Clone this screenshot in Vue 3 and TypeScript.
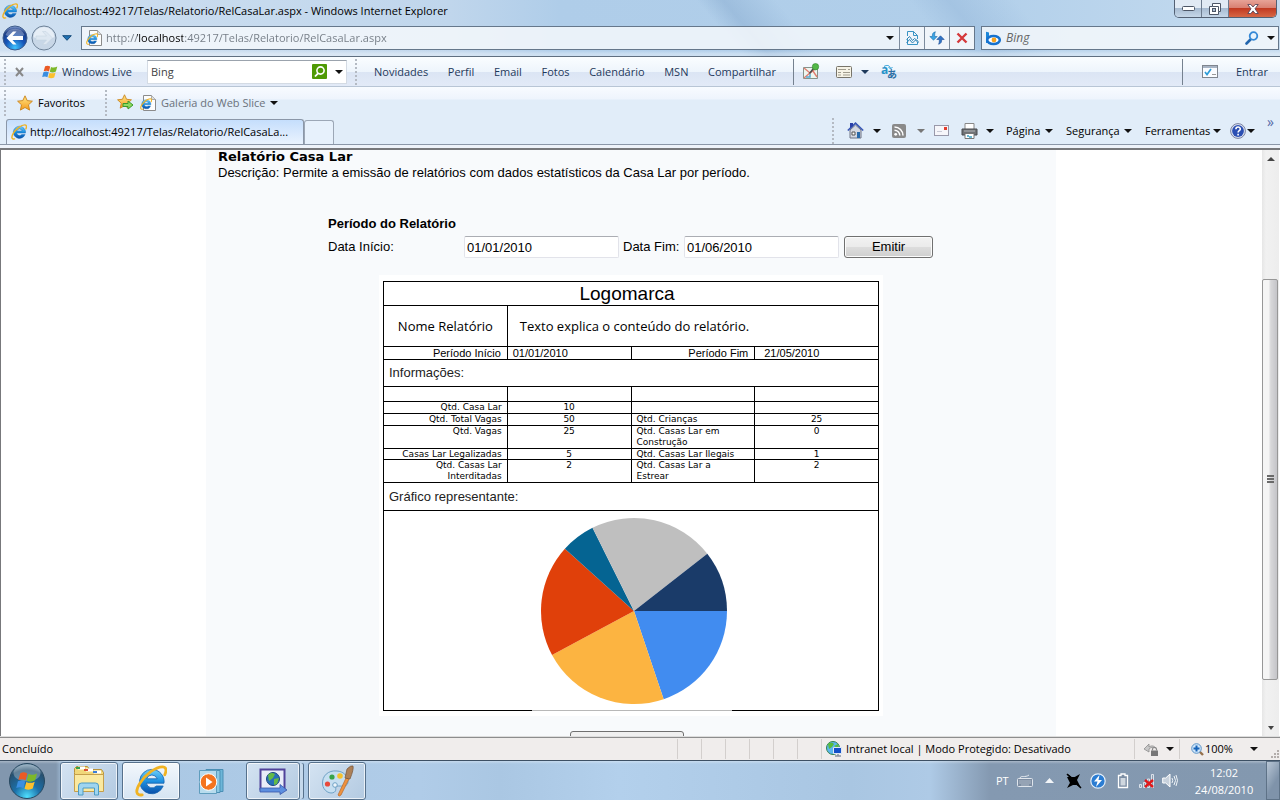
<script setup lang="ts">
import { ref } from 'vue'

interface Slice { from: number; to: number; color: string }
interface DataRow { left: string; leftValue: string; right: string; rightValue: string; tight?: boolean }

const address = ref('http://localhost:49217/Telas/Relatorio/RelCasaLar.aspx')
const toolbarSearch = ref('Bing')
const webSearch = ref('')
const startDate = ref('01/01/2010')
const endDate = ref('01/06/2010')

const liveLinks = ['Novidades', 'Perfil', 'Email', 'Fotos', 'Calendário', 'MSN', 'Compartilhar']

const rows: DataRow[] = [
  { left: 'Qtd. Casa Lar', leftValue: '10', right: '', rightValue: '' },
  { left: 'Qtd. Total Vagas', leftValue: '50', right: 'Qtd. Crianças', rightValue: '25' },
  { left: 'Qtd. Vagas', leftValue: '25', right: 'Qtd. Casas Lar em Construção', rightValue: '0' },
  { left: 'Casas Lar Legalizadas', leftValue: '5', right: 'Qtd. Casas Lar Ilegais', rightValue: '1', tight: true },
  { left: 'Qtd. Casas Lar Interditadas', leftValue: '2', right: 'Qtd. Casas Lar a Estrear', rightValue: '2' },
]

// Angles in degrees, clockwise from three o'clock
const slices: Slice[] = [
  { from: 0, to: 71.4, color: '#418cf0' },
  { from: 71.4, to: 151.8, color: '#fcb441' },
  { from: 151.8, to: 222, color: '#e0400a' },
  { from: 222, to: 243.5, color: '#056492' },
  { from: 243.5, to: 322, color: '#bfbfbf' },
  { from: 322, to: 360, color: '#1a3b69' },
]

function slicePath(s: Slice): string {
  const point = (deg: number) => {
    const a = (deg * Math.PI) / 180
    return `${(102 + 93 * Math.cos(a)).toFixed(2)} ${(100 + 93 * Math.sin(a)).toFixed(2)}`
  }
  return `M102 100L${point(s.from)}A93 93 0 0 1 ${point(s.to)}Z`
}
</script>

<template>
  <div class="desktop">
    <svg class="defs" aria-hidden="true">
      <defs>
        <linearGradient id="ieBlue" x1="0" y1="0" x2="0" y2="1">
          <stop offset="0" stop-color="#6fd0fb" /><stop offset="0.5" stop-color="#1c8fe0" /><stop offset="1" stop-color="#0a4fa8" />
        </linearGradient>
        <radialGradient id="orbBack" cx="0.5" cy="0.9" r="0.9">
          <stop offset="0" stop-color="#3fc4ff" /><stop offset="0.45" stop-color="#1555b8" /><stop offset="0.8" stop-color="#1b3c86" /><stop offset="1" stop-color="#8fa9d8" />
        </radialGradient>
        <radialGradient id="orbStart" cx="0.5" cy="0.95" r="0.95">
          <stop offset="0" stop-color="#4fe0ff" /><stop offset="0.4" stop-color="#1b6fa8" /><stop offset="0.8" stop-color="#27506f" /><stop offset="1" stop-color="#86a5bb" />
        </radialGradient>
        <linearGradient id="gold" x1="0" y1="0" x2="0" y2="1">
          <stop offset="0" stop-color="#ffe98a" /><stop offset="1" stop-color="#f59a1b" />
        </linearGradient>
      </defs>
      <symbol id="ie" viewBox="0 0 16 16">
        <path d="M8.4 2.2a6.1 6.1 0 1 0 5.7 8.3h-3.4a2.9 2.9 0 0 1-5-1.4h8.8A6.1 6.1 0 0 0 8.4 2.2ZM5.8 6.900a2.800 2.800 0 0 1 5.300 0Z" fill="url(#ieBlue)" stroke="#1262b0" stroke-width=".4" />
        <path d="M3.600 14.900C.4 15.600.1 12.800 2.400 9.200 5.200 4.700 10.400.9 13.700.9c2 0 2.200 1.700 1.200 4" fill="none" stroke="#f0b323" stroke-width="1.400" stroke-linecap="round" />
      </symbol>
      <symbol id="page" viewBox="0 0 16 16">
        <path d="M3.500.5h8l4 4v11h-12z" fill="#fdfdfd" stroke="#8b8b8b" />
        <path d="M11.500.5v4h4" fill="#ddd" stroke="#999" stroke-width=".8" />
        <use href="#ie" x="0" y="3" width="12" height="12" />
      </symbol>
      <symbol id="flag" viewBox="0 0 16 16">
        <path d="M3.100 2.300c1.900-.9 3.500-.7 5.100.2L7 7.400c-1.700-.9-3.400-1-5.300-.1z" fill="#ea5a24" />
        <path d="M9 2.900c1.900.9 3.900.8 6.300-.4L13.900 7.500c-2.200 1.200-4.200 1.300-6.100.3z" fill="#7db829" />
        <path d="M1.400 8.200c1.900-.9 3.600-.8 5.300.1L5.400 13.200c-1.700-.9-3.400-.9-5.200-.1z" fill="#3a8ee0" />
        <path d="M7.500 8.700c1.900.9 3.900.9 6.100-.2L12.200 13.500c-2.100 1.100-4.100 1-6 .1z" fill="#fbc02d" />
      </symbol>
      <symbol id="star" viewBox="0 0 16 16">
        <path d="M8 .8l2.200 4.800 5.200.6-3.900 3.600 1.100 5.300L8 12.500l-4.600 2.600 1.100-5.300L.6 6.200l5.200-.6z" fill="url(#gold)" stroke="#c9821a" stroke-width=".9" stroke-linejoin="round" />
      </symbol>
    </svg>

    <header class="chrome">
      <div class="glass">
        <div class="titlebar">
          <svg class="i16"><use href="#ie" /></svg>
          <span class="title">http://localhost:49217/Telas/Relatorio/RelCasaLar.aspx - Windows Internet Explorer</span>
          <div class="window-buttons">
            <button type="button" aria-label="Minimizar"><svg width="13" height="6"><rect x=".5" y=".5" width="12" height="4" rx="1" fill="#fff" stroke="#4d5666" /></svg></button>
            <button type="button" aria-label="Restaurar"><svg width="12" height="12"><path d="M3.500.5h8v8h-2v3h-9v-8h3z" fill="#fff" stroke="#4d5666" /><rect x="3.500" y="5.500" width="3" height="3" fill="#aebfd2" stroke="#4d5666" /><path d="M3.500 3.500h6v5" fill="none" stroke="#4d5666" /></svg></button>
            <button type="button" class="close" aria-label="Fechar"><svg width="12" height="10"><path d="M.8.5h3L6 3 8.200.500h3L8 4.800l3.300 4.700H8.200L6 6.900 3.800 9.500h-3L4 4.800z" fill="#fff" stroke="#59475a" stroke-width=".9" /></svg></button>
          </div>
        </div>
        <div class="navbar">
          <button type="button" class="plain" aria-label="Voltar">
            <svg width="26" height="26" viewBox="0 0 26 26"><circle cx="13" cy="13" r="12" fill="url(#orbBack)" stroke="#3e5c8b" /><path d="M3.500 10a10 9 0 0 1 19 0c-5 3-14 3-19 0z" fill="#fff" opacity=".3" /><path d="M4.500 13L11 6.500h3.500l-4 4.500H21v4H10.500l4 4.500H11z" fill="#fff" /></svg>
          </button>
          <button type="button" class="plain" aria-label="Avançar">
            <svg width="26" height="26" viewBox="0 0 26 26"><circle cx="13" cy="13" r="12" fill="#c8d7e7" stroke="#6f8399" /><path d="M2.500 12a10.500 10 0 0 1 21 0c-5 3-16 3-21 0z" fill="#eef4fa" opacity=".8" /><path d="M21.500 13L15 6.500h-3.500l4 4.500H5v4h10.500l-4 4.500H15z" fill="#dde7f1" stroke="#c3d0de" stroke-width=".5" /></svg>
          </button>
          <button type="button" class="plain recent" aria-label="Páginas recentes"><svg width="10" height="6"><path d="M.7.7h8.600L5 5.300z" fill="#2172b4" stroke="#174c7c" /></svg></button>
          <div class="addressbar">
            <svg class="i16"><use href="#page" /></svg>
            <input v-model="address" class="address" type="text" aria-label="Endereço" />
            <button type="button" class="plain drop" aria-label="Mostrar endereços"><i class="caret"></i></button>
            <button type="button" class="cell" aria-label="Modo de compatibilidade"><svg width="13" height="16"><path d="M1.500 6V1.500h6l4 4V9M1.500 9v5.500h10V12M7.500 1.500v4h4" fill="none" stroke="#3a94c4" /><path d="M.5 9.500l3-3 3 4 2-2 4 3M.5 13l3-3.500 3 3.500 3-3 3 3" fill="none" stroke="#2e84b5" /></svg></button>
            <button type="button" class="cell" aria-label="Atualizar"><svg width="16" height="14"><path d="M6.500.8C3.800 1.300 3.300 3 3.300 5.500H.8l3.700 3.700 3.700-3.700H5.700C5.700 3.500 5.600 2 6.500.8z" fill="#3aa4e4" stroke="#1b6ba9" stroke-width=".6" /><path d="M9.500 13.200c2.700-.5 3.200-2.200 3.200-4.700h2.500L11.500 4.800 7.800 8.500h2.500c0 2 .1 3.500-.8 4.700z" fill="#2f74c6" stroke="#1d4b93" stroke-width=".6" /></svg></button>
            <button type="button" class="cell" aria-label="Parar"><svg width="12" height="12"><path d="M1.500 1.500l9 9M10.500 1.500l-9 9" stroke="#d5393b" stroke-width="2.400" /></svg></button>
          </div>
          <div class="searchbar">
            <svg width="17" height="15"><path d="M1 .8l3 .8v10.500H1z" fill="#1b86d8" /><ellipse cx="8.500" cy="9" rx="6.300" ry="4" fill="#fff" stroke="#1672cf" stroke-width="2.600" /><circle cx="9" cy="9" r="2.400" fill="#f7a21b" /></svg>
            <input v-model="webSearch" class="web-search" type="text" placeholder="Bing" aria-label="Pesquisar na Web" />
            <button type="button" class="plain" aria-label="Pesquisar"><svg width="14" height="14"><path d="M5.500 8.500L1.500 12.500" stroke="#2265ad" stroke-width="2.600" stroke-linecap="round" /><circle cx="8.500" cy="5" r="3.800" fill="#e8f3fc" stroke="#3488d6" stroke-width="1.800" /></svg></button>
            <button type="button" class="plain" aria-label="Opções de pesquisa"><i class="caret"></i></button>
          </div>
        </div>
      </div>

      <div class="livebar">
        <i class="grip"></i>
        <button type="button" class="plain x-btn" aria-label="Fechar barra"><svg width="9" height="10"><path d="M1 1l7 8M8 1L1 9" stroke="#888" stroke-width="2" /></svg></button>
        <button type="button" class="plain live"><svg class="i16"><use href="#flag" /></svg>Windows Live</button>
        <div class="live-search">
          <input v-model="toolbarSearch" type="text" aria-label="Pesquisar no Bing" />
          <button type="button" class="plain" aria-label="Pesquisar"><svg width="15" height="15"><rect width="15" height="15" rx="1" fill="#4f9a05" /><circle cx="8.500" cy="6.500" r="3.600" fill="none" stroke="#fff" stroke-width="1.600" /><path d="M6 9.300L3 12.500" stroke="#fff" stroke-width="1.800" /></svg></button>
          <button type="button" class="plain" aria-label="Opções"><i class="caret"></i></button>
        </div>
        <i class="grip second"></i>
        <nav class="links"><a v-for="link in liveLinks" :key="link" href="#">{{ link }}</a></nav>
        <div class="live-icons">
          <button type="button" class="plain" aria-label="Mapa"><svg width="17" height="17"><path d="M.5 4.500h14v11H.5z" fill="#eef6ef" stroke="#85938b" /><path d="M1 5l6 5 3-2 4 6M1 15l7-6 6-4" fill="none" stroke="#e17d70" stroke-width="1.400" /><path d="M3 14h4v-3" fill="none" stroke="#5aa9d1" stroke-width="1.500" /><path d="M10.500 5.500l-4 5" stroke="#4d4d4d" stroke-width="1.600" /><circle cx="12.500" cy="3.700" r="3.200" fill="#53b848" stroke="#338a2c" stroke-width=".6" /></svg></button>
          <button type="button" class="plain" aria-label="Formulário"><svg width="16" height="12"><rect x=".5" y=".5" width="15" height="11" rx="1" fill="#f6f3e6" stroke="#77746a" /><path d="M2 3.500h8M12 3.500h2M2 6.500h3M2 9h3M7 6.500h7M7 9h7" stroke="#a09c8e" /></svg></button>
          <i class="caret navy"></i>
          <button type="button" class="plain" aria-label="Traduzir"><svg width="18" height="22"><text x="0" y="13" class="glyph-a">a</text><text x="6" y="17" class="glyph-b">あ</text><path d="M3 5.500c3-2 6-1 6.500 2M7.500 6l2 2 2-2" fill="none" stroke="#2ea0d8" /></svg></button>
        </div>
        <div class="signin">
          <svg width="16" height="13"><rect x=".5" y=".5" width="15" height="12" fill="#fafcff" stroke="#7f858e" /><path d="M1 2h14" stroke="#a8b4c4" stroke-width="2" /><path d="M3 7l2 2.500L9 4" fill="none" stroke="#2d9cd8" stroke-width="1.700" /><path d="M10 9.500h4" stroke="#999" /></svg>
          <a href="#">Entrar</a>
        </div>
      </div>

      <div class="favbar">
        <i class="grip"></i>
        <button type="button" class="plain fav"><svg class="i16"><use href="#star" /></svg>Favoritos</button>
        <i class="grip third"></i>
        <button type="button" class="plain add" aria-label="Adicionar a favoritos"><svg width="17" height="17"><use href="#star" width="15" height="15" /><path d="M6 9.500h5V7l5 4-5 4v-2.500H6z" fill="#8ed95f" stroke="#3a9a2b" /></svg></button>
        <button type="button" class="plain slice"><svg class="i16"><use href="#page" /></svg>Galeria do Web Slice<i class="caret"></i></button>
      </div>

      <div class="tabbar">
        <button type="button" class="tab"><svg class="i16"><use href="#ie" /></svg>http://localhost:49217/Telas/Relatorio/RelCasaLa...</button>
        <button type="button" class="new-tab" aria-label="Nova guia"></button>
        <div class="commands">
          <i class="grip"></i>
          <button type="button" class="plain c-home" aria-label="Página inicial"><svg width="17" height="17"><path d="M3 8v8h11V8L8.500 3z" fill="#d4d8e2" stroke="#6c7384" /><path d="M.8 8.500l7.700-7.300 7.700 7.300" fill="none" stroke="#3856b4" stroke-width="1.600" /><path d="M3 1h3v3L3 6z" fill="#2a3fa8" /><path d="M10 10h3v6h-3z" fill="#2969a9" /><path d="M5 10h3v3H5z" fill="#fff" stroke="#555" /></svg><i class="caret"></i></button>
          <button type="button" class="plain c-feed" aria-label="Feeds"><svg width="14" height="14"><rect width="14" height="14" rx="2" fill="#8a8a8a" /><circle cx="3.700" cy="10.300" r="1.400" fill="#fff" /><path d="M2.500 6.200a5.300 5.300 0 0 1 5.300 5.300M2.500 3a8.500 8.500 0 0 1 8.500 8.500" fill="none" stroke="#fff" stroke-width="1.500" /></svg><i class="caret gray"></i></button>
          <button type="button" class="plain c-mail" aria-label="Email"><svg width="15" height="11"><rect x=".5" y=".5" width="14" height="10" fill="#f6f6fa" stroke="#99a" /><rect x="10" y="2" width="3" height="3" fill="#e33d2e" /><path d="M3 6.500h5" stroke="#c9cbd6" /></svg></button>
          <button type="button" class="plain c-print" aria-label="Imprimir"><svg width="17" height="16"><path d="M4 .5h9v6H4z" fill="#fff" stroke="#888" /><path d="M1 6h15v6H1z" fill="#6f7276" stroke="#484a4e" /><path d="M3 8h11" stroke="#b4b6b9" /><path d="M4 10.500h9v5H4z" fill="#fff" stroke="#777" /><path d="M6 13h2M8 14h3" stroke="#3aa1c4" stroke-width="1.500" /></svg><i class="caret"></i></button>
          <button type="button" class="plain c-page">Página<i class="caret"></i></button>
          <button type="button" class="plain c-safe">Segurança<i class="caret"></i></button>
          <button type="button" class="plain c-tools">Ferramentas<i class="caret"></i></button>
          <button type="button" class="plain c-help" aria-label="Ajuda"><svg width="16" height="16"><circle cx="8" cy="8" r="7.400" fill="#dfe5f2" stroke="#7880a0" /><circle cx="8" cy="8" r="5.900" fill="#2b4fb3" /><path d="M5.900 6.200c0-3 4.400-2.800 4.400-.2 0 1.600-2.200 1.600-2.200 3.400M8.100 10.800v1.600" fill="none" stroke="#fff" stroke-width="1.600" /></svg><i class="caret"></i></button>
          <button type="button" class="plain more" aria-label="Mais">»</button>
        </div>
      </div>
      <div class="frame-edge"></div>
    </header>

    <div class="viewport">
      <main class="canvas">
        <div class="sheet">
          <h1>Relatório Casa Lar</h1>
          <p class="desc">Descrição: Permite a emissão de relatórios com dados estatísticos da Casa Lar por período.</p>
          <form class="period" @submit.prevent>
            <h2>Período do Relatório</h2>
            <div class="fields">
              <label class="first" for="inicio">Data Início:</label>
              <input id="inicio" v-model="startDate" type="text" />
              <label for="fim">Data Fim:</label>
              <input id="fim" v-model="endDate" type="text" />
              <button type="submit" class="emit">Emitir</button>
            </div>
          </form>
          <div class="report">
            <table>
              <colgroup><col /><col /><col /><col /></colgroup>
              <tbody>
                <tr class="logo"><th colspan="4">Logomarca</th></tr>
                <tr class="name"><td>Nome Relatório</td><td colspan="3">Texto explica o conteúdo do relatório.</td></tr>
                <tr class="range"><td class="right">Período Início</td><td>01/01/2010</td><td class="right">Período Fim</td><td class="until">21/05/2010</td></tr>
                <tr class="section info"><td colspan="4">Informações:</td></tr>
                <tr class="blank"><td></td><td></td><td></td><td></td></tr>
                <tr v-for="row in rows" :key="row.left" class="data" :class="{ tight: row.tight }">
                  <td class="right">{{ row.left }}</td>
                  <td class="mid">{{ row.leftValue }}</td>
                  <td class="wrap">{{ row.right }}</td>
                  <td class="mid">{{ row.rightValue }}</td>
                </tr>
                <tr class="section"><td colspan="4">Gráfico representante:</td></tr>
                <tr class="chart">
                  <td colspan="4">
                    <svg class="pie" width="200" height="200" role="img" aria-label="Gráfico representante">
                      <path v-for="s in slices" :key="s.color" :d="slicePath(s)" :fill="s.color" />
                      <path d="M0 199.500h200" stroke="#b8b8b8" />
                    </svg>
                  </td>
                </tr>
              </tbody>
            </table>
          </div>
          <button type="button" class="below" aria-label="Imprimir"></button>
        </div>
      </main>
      <div class="scroll" aria-hidden="true">
        <span class="arrow"><i class="caret up"></i></span>
        <span class="before"></span>
        <span class="thumb"><i></i><i></i><i></i></span>
        <span class="after"></span>
        <span class="arrow"><i class="caret small"></i></span>
      </div>
    </div>

    <footer class="status">
      <span class="done">Concluído</span>
      <span v-for="n in 6" :key="n" class="slot"></span>
      <span class="zone">
        <svg width="17" height="17"><circle cx="7" cy="7" r="6.500" fill="#5bb6ef" stroke="#33824b" /><path d="M2 3c3-2 5-1 6 0L6 6 3 8zM8 5l4-2 1 5z" fill="#58bc3c" /><path d="M7.500 6.500h8v6h-8z" fill="#1450c8" stroke="#dfe6f2" /><path d="M9 15h6M12 13v2" stroke="#8b929e" stroke-width="1.500" /></svg>
        Intranet local | Modo Protegido: Desativado
      </span>
      <span class="lock"><svg width="16" height="15"><path d="M1 7l5-5v3c3-2 5-1 7 1-3-1-5-1-7 1v3z" fill="#c8c8c8" stroke="#8e8e8e" stroke-width=".8" /><path d="M8 8.500h7v5.500H8z" fill="#777" /><path d="M9.500 8.500V7c0-2 4-2 4 0v1.500" fill="none" stroke="#888" stroke-width="1.200" /></svg><i class="caret"></i></span>
      <span class="zoom"><svg width="13" height="13"><path d="M8 8l4 4" stroke="#96714c" stroke-width="2.400" /><circle cx="5.500" cy="5.500" r="4.800" fill="#cfe6fa" stroke="#5b93c7" /><path d="M5.500 2.500v6M2.500 5.500h6" stroke="#1763b8" stroke-width="2" /></svg><span class="pct">100%</span><i class="caret"></i></span>
      <svg class="size-grip" width="10" height="10"><path d="M7 1h2M4 4h2M7 4h2M1 7h2M4 7h2M7 7h2" stroke="#b3adab" stroke-width="2" /></svg>
    </footer>

    <nav class="taskbar">
      <button type="button" class="plain start" aria-label="Iniciar"><svg width="38" height="38" viewBox="0 0 38 38"><circle cx="19" cy="19" r="17.500" fill="url(#orbStart)" stroke="#274860" /><ellipse cx="19" cy="11" rx="13.500" ry="8.500" fill="#fff" opacity=".28" /><use href="#flag" x="8" y="8" width="22" height="22" /></svg></button>
      <button type="button" class="task" aria-label="Explorador"><svg width="34" height="32"><path d="M2.500 7.500V3.500l2-2h11l2 3h12l2 3v18h-29z" fill="#f1d778" stroke="#b8923b" /><path d="M6 3h7M14 5h7M22 7h7" stroke="#fff" stroke-width="3" /><path d="M4 3h4" stroke="#37a24b" stroke-width="2" /><path d="M12 5h4" stroke="#da4e32" stroke-width="2" /><path d="M21 7h4" stroke="#3b7dd8" stroke-width="2" /><path d="M2.500 9.500h29v17h-29z" fill="#fae9a0" stroke="#c59f4b" /><path d="M6.500 30v-9q0-3 3-3h14q3 0 3 3v9h-4v-7H11v7z" fill="#9fd5f0" stroke="#4d9bc4" /></svg></button>
      <button type="button" class="task bright" aria-label="Internet Explorer"><svg width="32" height="32"><use href="#ie" width="32" height="32" /></svg></button>
      <button type="button" class="task bare" aria-label="Media Player"><svg width="30" height="28"><path d="M8 2.500h17v22H8z" fill="#6db6d8" stroke="#4a8fb5" /><path d="M5 3.500h17v22H5z" fill="#8cc9e3" stroke="#4a8fb5" /><path d="M1.500 3.500h17v23h-17z" fill="#b8dcee" stroke="#5f9dbd" /><circle cx="10.500" cy="15" r="8.300" fill="#f4741f" stroke="#fff" /><path d="M8 10.500l6.500 4.500L8 19.500z" fill="#fff" /></svg></button>
      <button type="button" class="task stack" aria-label="Área de trabalho remota"><svg width="32" height="28"><path d="M3.500 2.500h24v20h-24z" fill="#e8ecf8" stroke="#51429a" stroke-width="2" /><circle cx="16" cy="12" r="6.500" fill="#2870b8" stroke="#1a4680" /><path d="M11 8c3-3 5-2 7-1l-2 4-4 3zM17 12l5-1-2 6-3 1z" fill="#64b946" /><path d="M3 21h20v-3.500l7 5.500-7 4.500V25H3z" fill="#5c8fe0" stroke="#3856a8" stroke-width=".8" /></svg></button>
      <button type="button" class="task" aria-label="Paint"><svg width="34" height="34"><path d="M17 7C8 6 2 12 2.500 20c.5 7 8 11 12 8 3-2-1-6 4-6 4 0 10 1 9.500-5C27.500 11 23 7.500 17 7z" fill="#c6dff1" stroke="#6fa2c6" /><circle cx="7.500" cy="20" r="2.600" fill="#e84a3b" /><circle cx="12" cy="13" r="2.600" fill="#37a34a" /><circle cx="20" cy="12" r="2.800" fill="#f6c22d" /><circle cx="15" cy="21" r="2.300" fill="#eef5fa" stroke="#6fa2c6" /><path d="M18 31l8-17 3 1-8 16q-2 2-3 0z" fill="#ef9340" stroke="#b4672a" stroke-width=".7" /><path d="M25 14l2-9q4-4 6-3 1 3-3 13z" fill="#ad8057" stroke="#76543a" stroke-width=".7" /></svg></button>
      <div class="tray">
        <span class="lang">PT</span>
        <svg class="kbd" width="16" height="14"><path d="M3 4c1-3 5 0 9-3" fill="none" stroke="#e4e9ef" /><rect x=".5" y="4.500" width="15" height="8" rx="1" fill="#7d8da2" stroke="#dfe5ec" /><path d="M2.500 7h11M2.500 9h11M4.500 11h7" stroke="#dfe5ec" stroke-dasharray="1 1" /></svg>
        <svg class="up-tray" width="9" height="5"><path d="M4.500 0L9 5H0z" fill="#f2f5f8" /></svg>
        <svg class="xic" width="16" height="16"><path d="M2 1l5 4 7-4-3 6 4 8-6-4-8 4 4-7z" fill="#000" /><path d="M1 4h9v8H5z" fill="#000" /><path d="M1 1l14 14" stroke="#000" stroke-width="1.500" /></svg>
        <svg class="bolt" width="16" height="16"><circle cx="8" cy="8" r="7.200" fill="#2c7dd2" stroke="#e6f0fa" stroke-width="1.200" /><path d="M9.500 2L4 8.500h3.500L6 14l6-7H8.500z" fill="#fff" /></svg>
        <svg class="bat" width="12" height="16"><path d="M4 2.500V1h4v1.500h2.500v12h-9v-12z" fill="#7b8da3" stroke="#fff" stroke-width="1.300" /><path d="M3.500 5h5v7.500h-5z" fill="#f4f6f8" opacity=".7" /></svg>
        <svg class="sig" width="17" height="16"><path d="M1.500 14.500v-3h2v3zM5.500 14.500v-5h2v5zM9.500 14.500V6h2v8.500zM13.500 14.500V1.500h2v13z" fill="#8fa0b3" stroke="#dbe2ea" /><path d="M7 7l8 7M15 7l-8 7" stroke="#e1191b" stroke-width="2.400" /></svg>
        <svg class="snd" width="16" height="15"><path d="M.7 5h3L8 1v13l-4.300-4h-3z" fill="#c7d1dc" stroke="#fff" /><path d="M10 5q1.500 2.500 0 5M12 3q3 4.500 0 9M14 2q3 5.500 0 11" fill="none" stroke="#f0f4f8" /></svg>
        <time class="clock">12:02<br />24/08/2010</time>
        <button type="button" class="peek" aria-label="Mostrar área de trabalho"></button>
      </div>
    </nav>
  </div>
</template>

<style>
html, body { margin: 0; overflow: hidden; }
</style>

<style scoped>
* { box-sizing: border-box; }
.desktop { height: 100vh; display: flex; flex-direction: column; font: 11px/16px "Open Sans", "Noto Sans", sans-serif; color: #000; background: #fff; overflow: hidden; }
.defs { position: absolute; width: 0; height: 0; }
button, input { font: inherit; color: inherit; margin: 0; }
a { color: inherit; text-decoration: none; }
svg { flex: none; display: block; }
.i16 { width: 16px; height: 16px; }
.plain { border: 0; background: none; padding: 0; display: flex; align-items: center; white-space: nowrap; flex: none; }
.caret { width: 0; height: 0; flex: none; border: 4px solid transparent; border-top-color: #111; border-bottom: 0; }
.caret.navy { border-top-color: #1e395b; }
.caret.gray { border-top-color: #777; }
.caret.small { border-width: 4px 3px 0; border-top-color: #444; }
.caret.up { border: 4px solid transparent; border-top: 0; border-bottom-color: #444; }
.grip { flex: none; width: 2px; height: 26px; background: repeating-linear-gradient(#b4bac3 0 2px, transparent 2px 4px); margin-left: 4px; }

.chrome { flex: none; }
.glass { height: 57px; border-bottom: 1px solid #5f6f80; background: linear-gradient(rgba(255,255,255,0) 50px, rgba(255,255,255,.35) 54px), linear-gradient(50deg, transparent 56%, rgba(128,164,202,.4) 58%, transparent 62%, transparent 72%, rgba(140,175,212,.35) 75%, transparent 80%), linear-gradient(90deg, #cfe0f1 0, #c0d6ec 450px, #afcde9 560px, #b1cfea 75%, #c5dbef 100%); }
.titlebar { height: 22px; display: flex; align-items: center; padding: 0 3px 0 2px; }
.title { flex: 1; margin-left: 3px; white-space: nowrap; }
.window-buttons { align-self: flex-start; display: flex; border: 1px solid #536073; border-top: 0; border-radius: 0 0 5px 5px; overflow: hidden; height: 18px; }
.window-buttons button { width: 27px; border: 0; border-right: 1px solid #6c7b8e; background: linear-gradient(#e1eaf4 0 45%, #a7bbd1 50%, #c6d7e8); display: flex; align-items: center; justify-content: center; padding: 0; }
.window-buttons .close { width: 47px; border-right: 0; background: linear-gradient(#e7a397 0, #d98072 45%, #c13a22 50%, #d76745); }
.navbar { height: 32px; display: flex; align-items: center; padding: 0 1px 0 2px; gap: 3px; }
.recent { width: 18px; justify-content: center; margin-left: -2px; }
.addressbar { flex: 1; min-width: 0; height: 24px; border: 1px solid #65778b; display: flex; align-items: stretch; background: rgba(244,248,252,.85); margin-left: 2px; }
.addressbar .i16 { align-self: center; margin-left: 4px; }
.address { flex: 1; min-width: 0; border: 0; padding: 0 0 0 4px; outline: 0; color: transparent; background: linear-gradient(90deg, #737b84 0 35px, #000 35px 81px, #737b84 81px); -webkit-background-clip: text; background-clip: text; }
.drop { width: 18px; justify-content: center; }
.cell { width: 25px; border: 0; border-left: 1px solid #7d8c9d; background: #f0f5fa; padding: 0; display: flex; align-items: center; justify-content: center; }
.searchbar { width: 298px; min-width: 0; height: 24px; margin-left: 3px; border: 1px solid #65778b; background: rgba(244,248,252,.85); display: flex; align-items: center; gap: 8px; padding: 0 3px; }
.web-search { flex: 1; min-width: 0; border: 0; background: none; padding: 0; margin-left: -4px; outline: 0; font-style: italic; font-size: 12px; }
.web-search::placeholder { color: #666; opacity: 1; }

.livebar { height: 30px; display: flex; align-items: center; color: #1e395b; background: linear-gradient(#fafdff 0, #eef5fc 50%, #dbe5f4 52%, #e2eaf7 100%); border-bottom: 1px solid #b8c5d5; }
.x-btn { margin-left: 9px; }
.live { margin-left: 18px; gap: 4px; width: 105px; }
.live-search { width: 200px; height: 24px; background: #fff; border: 1px solid #d4dbe4; border-top-color: #9ba3ad; display: flex; align-items: center; gap: 8px; padding: 0 3px; }
.live-search input { flex: 1; min-width: 0; border: 0; padding: 0; outline: 0; color: #444; }
.second { margin-left: 8px; }
.links { display: flex; justify-content: space-between; margin-left: 17px; width: 402px; white-space: nowrap; }
.live-icons { height: 26px; border-left: 1px solid #75818f; margin-left: 17px; padding-left: 9px; display: flex; align-items: center; gap: 16px; }
.live-icons .caret { margin: 0 -4px 0 -7px; }
.glyph-a { font: bold 12px "Open Sans", sans-serif; fill: #2592c9; }
.glyph-b { font: bold 10px "Noto Sans CJK JP", sans-serif; fill: #2b6fa5; }
.signin { margin-left: auto; width: 98px; height: 26px; border-left: 1px solid #75818f; display: flex; align-items: center; gap: 18px; padding-left: 19px; }

.favbar { height: 31px; display: flex; align-items: center; background: linear-gradient(#f8fbff 0, #eef4fd 12px, #e1edf9 13px); }
.fav { margin-left: 11px; gap: 5px; width: 84px; }
.third { margin-left: 4px; }
.add { margin-left: 10px; }
.slice { margin-left: 6px; gap: 5px; color: #6b727b; }

.tabbar { height: 27px; display: flex; align-items: flex-end; padding: 0 0 0 6px; background: #e1edf9; border-bottom: 1px solid #8b97a8; }
.tab { width: 298px; height: 25px; flex: none; border: 1px solid #8b97a8; border-bottom: 0; border-radius: 3px 3px 0 0; background: linear-gradient(#c5defc, #eaf3fe); display: flex; align-items: center; gap: 3px; padding: 0 4px; white-space: nowrap; overflow: hidden; text-align: left; }
.new-tab { width: 30px; height: 24px; flex: none; border: 1px solid #9ca7b6; border-bottom: 0; border-radius: 3px 3px 0 0; background: #e7f1fc; }
.commands { margin-left: auto; width: 448px; height: 27px; display: flex; align-items: center; }
.commands .grip { margin: 0; }
.commands .plain { justify-content: space-between; }
.c-home { margin-left: 13px; width: 34px; }
.c-feed { margin-left: 11px; width: 33px; }
.c-mail { margin-left: 9px; width: 15px; }
.c-print { margin-left: 12px; width: 33px; }
.c-page { margin-left: 12px; width: 47px; }
.c-safe { margin-left: 13px; width: 66px; }
.c-tools { margin-left: 13px; width: 76px; }
.c-help { margin-left: 9px; width: 25px; }
.more { margin: -18px 0 0 12px; color: #5669a7; font-size: 14px; }
.frame-edge { height: 5px; background: #eef3fa; border-bottom: 2px solid #77787b; }

.viewport { flex: 1; min-height: 0; display: flex; border-bottom: 1px solid #ddd; }
.canvas { flex: 1; min-width: 0; overflow: hidden; background: #fff; box-shadow: inset 1px 0 0 #77787b; }
.sheet { max-width: 850px; min-height: 100%; margin: 0 auto; padding: 0 12px; background: #f8fafc; font: 13px/16px "Liberation Sans", Arial, sans-serif; }
h1 { margin: 0; font: bold 13px/14px "DejaVu Sans", Verdana, sans-serif; height: 14px; }
.desc { margin: 0; line-height: 18px; }
.period { margin: 33px 0 0 110px; }
h2 { margin: 0; font-size: 13px; line-height: 17px; }
.fields { margin-top: 4px; display: flex; align-items: center; white-space: nowrap; }
.fields .first { width: 136px; }
.fields input { width: 155px; height: 22px; border: 1px solid #e2e3ea; border-top-color: #abadb3; border-radius: 2px; background: #fff; padding: 0 2px; }
.fields input + label { width: 65px; padding-left: 4px; }
.emit { width: 89px; height: 22px; margin-left: 5px; border: 1px solid #707070; border-radius: 3px; padding: 0; background: linear-gradient(#f2f2f2 0, #ebebeb 48%, #dddddd 50%, #cfcfcf); box-shadow: inset 0 0 0 1px #fbfbfb; }
.report { width: 504px; margin: 17px auto 0; position: relative; background: #fff; padding: 6px 4px 5px; }
table { width: 496px; table-layout: fixed; border-collapse: collapse; }
td, th { border: 1px solid #000; padding: 0 6px; font-weight: 400; vertical-align: top; text-align: left; }
.logo th { height: 24px; text-align: center; font-size: 19px; line-height: 23px; padding: 0 8px 0 0; }
.name td { height: 41px; vertical-align: middle; font: 13px/18px "Open Sans", sans-serif; text-align: center; padding: 0; white-space: nowrap; }
.name td + td { text-align: left; padding-left: 12px; }
.range td { height: 13px; font-size: 11px; line-height: 12px; padding-left: 5px; }
.range .until { padding-left: 9px; }
.section td { height: 28px; vertical-align: middle; color: #222; padding-left: 5px; }
.info td { height: 27px; }
.blank td { height: 15px; }
.data td { font: 9px/11px "DejaVu Sans", Verdana, sans-serif; padding: 0 5px; }
.data td.wrap { padding-right: 14px; }
.data.tight td { line-height: 10px; }
td.right { text-align: right; }
.data td.mid { text-align: center; padding: 0; }
.chart td { padding: 0; height: 200px; }
.pie { position: relative; margin: 0 auto -1px 148px; }
.below { display: block; width: 114px; height: 24px; margin: 15px 0 0 352px; border: 1px solid #707070; border-radius: 3px; background: #f0f0f0; }
.scroll { width: 18px; flex: none; display: flex; flex-direction: column; background: linear-gradient(90deg, #e6e6e6, #f1f1f1 4px, #ededed); border-right: 1px solid #fff; }
.arrow { height: 17px; flex: none; display: flex; align-items: center; justify-content: center; }
.before { flex: 112; }
.after { flex: 39; }
.thumb { flex: 400; border: 1px solid #979797; border-radius: 2px; background: linear-gradient(90deg, #f5f5f5 0 40%, #d8d8da 55%, #c4c4c8); display: flex; flex-direction: column; align-items: center; justify-content: center; gap: 1px; margin-right: 1px; }
.thumb i { width: 7px; height: 2px; background: #6a6a6a; }

.status { flex: none; height: 23px; display: flex; align-items: center; background: #f0edec; border-top: 1px solid #8d8d8d; white-space: nowrap; }
.done { flex: 1; padding-left: 2px; }
.slot, .zone, .lock, .zoom { height: 20px; border-left: 1px solid #d3cfcd; display: flex; align-items: center; }
.slot { width: 24px; }
.zone { width: 313px; padding-left: 4px; gap: 3px; }
.lock { width: 45px; padding-left: 8px; gap: 7px; }
.zoom { width: 91px; padding-left: 11px; }
.pct { width: 45px; margin-left: 1px; }
.size-grip { align-self: flex-end; }

.taskbar { flex: none; height: 40px; border-top: 1px solid #3d5064; display: flex; align-items: center; gap: 4px; background: linear-gradient(rgba(255,255,255,.3), rgba(255,255,255,0) 3px), linear-gradient(90deg, #8297ae 0 56px, #a9c7e3 64px, #b0cce8 420px, #aac7e3 500px, #b3d0ec 620px, #a9c6e2 850px, #aecae6 930px, #8499b1 990px, #8398af 100%); }
.start { width: 56px; justify-content: center; padding-right: 2px; }
.task { width: 58px; height: 38px; flex: none; border: 1px solid #56718c; border-radius: 3px; background: linear-gradient(130deg, #d4e3f2, #b3cae1); box-shadow: inset 0 0 0 1px rgba(255,255,255,.7); display: flex; align-items: center; justify-content: center; padding: 0; }
.task.bright { background: linear-gradient(#f2f7fc, #d5e4f2); }
.task.bare { border-color: transparent; background: none; box-shadow: none; }
.task.stack { width: 54px; margin-right: 4px; box-shadow: inset 0 0 0 1px rgba(255,255,255,.7), 4px 0 0 -1px #c5d9ec, 5px 0 0 -1px #56718c; }
.tray { margin-left: auto; height: 100%; display: flex; align-items: center; color: #fff; white-space: nowrap; }
.lang { width: 21px; }
.up-tray { margin-left: 12px; }
.xic { margin-left: 12px; }
.bolt { margin-left: 8px; }
.bat { margin-left: 11px; }
.sig { margin-left: 9px; }
.snd { margin-left: 7px; }
.clock { width: 88px; padding-left: 4px; text-align: center; line-height: 17px; }
.peek { width: 14px; height: 100%; border: 1px solid #5e7287; background: linear-gradient(120deg, #b8c6d5, #7f93aa 60%); padding: 0; }
</style>
